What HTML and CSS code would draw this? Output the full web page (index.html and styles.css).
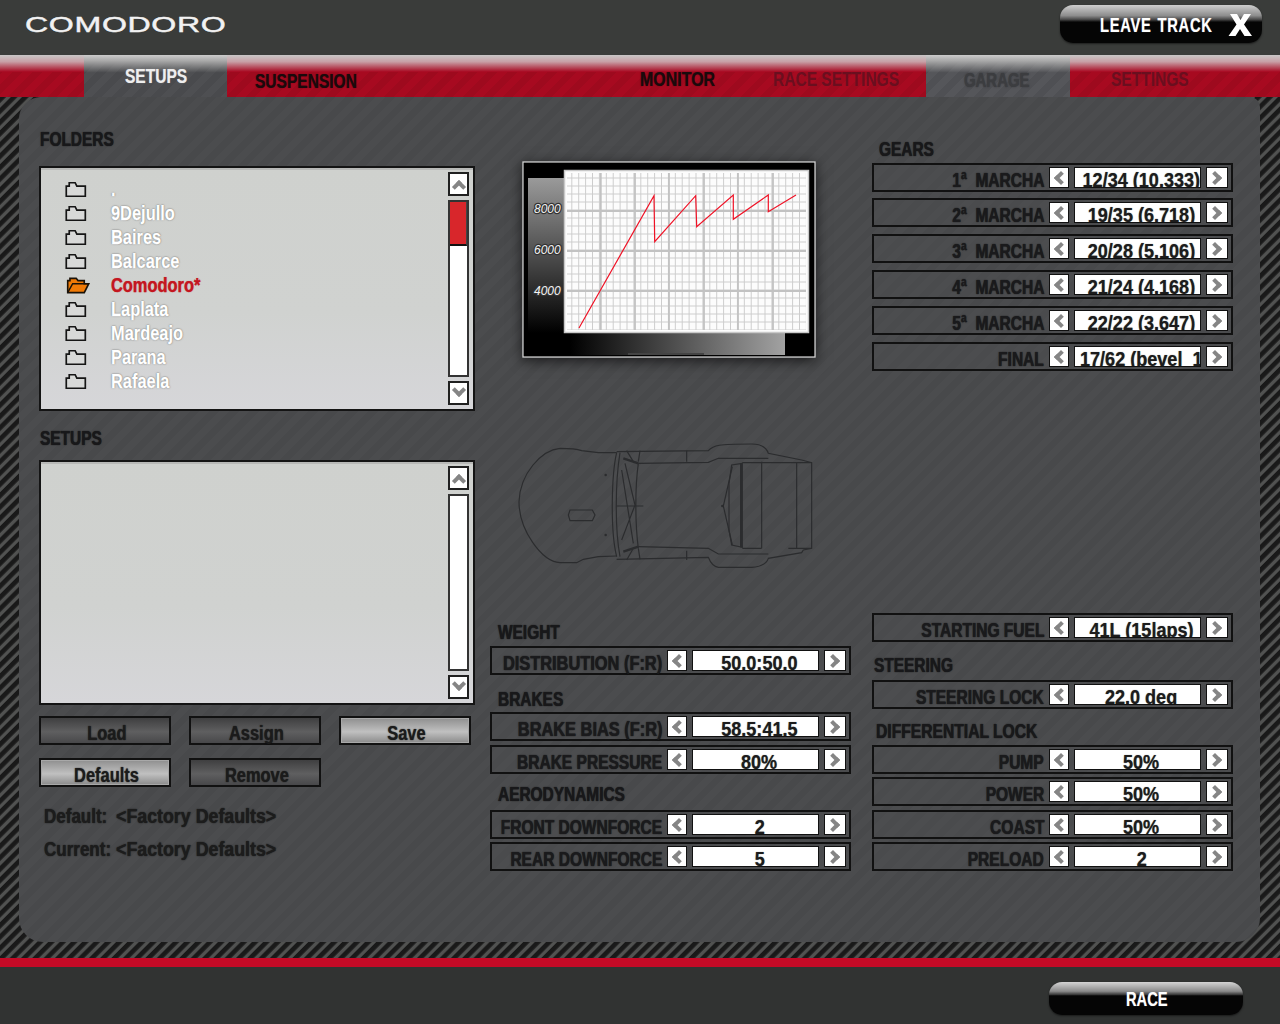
FILE: index.html
```html
<!DOCTYPE html>
<html lang="en">
<head>
<meta charset="utf-8">
<title>Comodoro setups</title>
<link rel="stylesheet" href="styles.css">
</head>
<body>
<svg class="defs" aria-hidden="true">
  <symbol id="folder" viewBox="0 0 26 19">
    <path d="M1.500 17.500V5.500H5V1.500H12L14 5.500H24V17.500Z" fill="#d8d9d8" stroke="#151515" stroke-width="2"/>
  </symbol>
  <symbol id="folder-open" viewBox="0 0 26 19">
    <path d="M1.500 17.500V4H4V1.500H11L13 4H20V7.500H25L20 17.500Z" fill="#f07a06" stroke="#1a1208" stroke-width="1.800"/>
    <path d="M1.500 17.500L7 7.500H25" fill="none" stroke="#1a1208" stroke-width="1.600"/>
  </symbol>
</svg>
<div class="app">
  <header class="topbar">
    <div class="logo"><span class="logo-text">COMODORO</span></div>
    <button class="pill leave">
      <span class="leave-text">LEAVE TRACK</span>
      <svg class="leave-x" viewBox="0 0 24 24"><path d="M2 1H9L12.500 7L16 1H23L16 11.500L24 23H16.500L12 16L7.500 23H0.500L8.500 11.500Z" fill="#fff"/></svg>
    </button>
  </header>
  <nav class="tabs">
    <a class="tab tab-setups"><span>SETUPS</span></a>
    <a class="tab tab-suspension"><span>SUSPENSION</span></a>
    <a class="tab tab-monitor"><span>MONITOR</span></a>
    <a class="tab tab-race dim"><span>RACE SETTINGS</span></a>
    <a class="tab tab-garage"><span>GARAGE</span></a>
    <a class="tab tab-settings dim"><span>SETTINGS</span></a>
  </nav>
  <main class="carbon">
    <div class="panel">
      <section class="col-left">
        <h2 class="title mt32"><span>FOLDERS</span></h2>
        <div class="list mt17">
          <ul class="items">
            <li class="item"><svg class="folder"><use href="#folder"/></svg><span>.</span></li>
            <li class="item"><svg class="folder"><use href="#folder"/></svg><span>9Dejullo</span></li>
            <li class="item"><svg class="folder"><use href="#folder"/></svg><span>Baires</span></li>
            <li class="item"><svg class="folder"><use href="#folder"/></svg><span>Balcarce</span></li>
            <li class="item active"><svg class="folder"><use href="#folder-open"/></svg><span>Comodoro*</span></li>
            <li class="item"><svg class="folder"><use href="#folder"/></svg><span>Laplata</span></li>
            <li class="item"><svg class="folder"><use href="#folder"/></svg><span>Mardeajo</span></li>
            <li class="item"><svg class="folder"><use href="#folder"/></svg><span>Parana</span></li>
            <li class="item"><svg class="folder"><use href="#folder"/></svg><span>Rafaela</span></li>
          </ul>
          <div class="scroll">
            <div class="sbtn"><i class="chev up"></i></div>
            <div class="track"><div class="thumb"></div></div>
            <div class="sbtn"><i class="chev down"></i></div>
          </div>
        </div>
        <h2 class="title mt17"><span>SETUPS</span></h2>
        <div class="list mt12">
          <ul class="items"></ul>
          <div class="scroll">
            <div class="sbtn"><i class="chev up"></i></div>
            <div class="track"></div>
            <div class="sbtn"><i class="chev down"></i></div>
          </div>
        </div>
        <div class="btns mt11">
          <button class="btn"><span>Load</span></button>
          <button class="btn"><span>Assign</span></button>
          <button class="btn light"><span>Save</span></button>
        </div>
        <div class="btns mt13">
          <button class="btn light"><span>Defaults</span></button>
          <button class="btn"><span>Remove</span></button>
        </div>
        <p class="info mt19"><span class="info-key"><span>Default:</span></span><span class="info-val">&lt;Factory Defaults&gt;</span></p>
        <p class="info mt13"><span class="info-key"><span>Current:</span></span><span class="info-val">&lt;Factory Defaults&gt;</span></p>
      </section>

      <section class="col-mid">
        <div class="graph">
          <svg viewBox="0 0 294 197" width="294" height="197">
            <defs>
              <pattern id="minor" x="2" y="1.500" width="6.900" height="8" patternUnits="userSpaceOnUse">
                <path d="M6.900 0V8M0 8H6.900" stroke="#cdcdcd" stroke-width="2" fill="none"/>
              </pattern>
              <linearGradient id="gv" x1="0" y1="0" x2="0" y2="1">
                <stop offset="0" stop-color="#9a9a9a"/><stop offset="1" stop-color="#000"/>
              </linearGradient>
              <linearGradient id="gh" x1="0" y1="0" x2="1" y2="0">
                <stop offset="0" stop-color="#000"/><stop offset="1" stop-color="#a2a2a2"/>
              </linearGradient>
            </defs>
            <rect x="1" y="1" width="292" height="195" fill="#000" stroke="#d8d8d8" stroke-width="1.200"/>
            <rect x="6" y="17" width="37" height="155" fill="url(#gv)"/>
            <rect x="48" y="170" width="215" height="24" fill="url(#gh)"/>
            <rect x="106" y="192" width="76" height="2" fill="#444"/>
            <rect x="42" y="9" width="245" height="163" fill="#fcfcfc"/>
            <rect x="45" y="12" width="239" height="157" fill="url(#minor)"/>
            <path d="M78.800 12V169M113 12V169M147 12V169M182 12V169M216 12V169M251 12V169M45 50H284M45 90H284M45 130H284" stroke="#c2c2c2" stroke-width="1.800" fill="none"/>
            <rect x="42.500" y="9.500" width="244" height="162" fill="none" stroke="#c8c8c8" stroke-width="1.500"/>
            <path d="M57 167L132 34.700L132.700 80.700L173.700 34.700L174.700 65.700L211.300 34L211.300 58.300L246.300 34L246.300 50.700L274 34" fill="none" stroke="#f01226" stroke-width="1.200"/>
            <text class="axis" x="12" y="52">8000</text>
            <text class="axis" x="12" y="93">6000</text>
            <text class="axis" x="12" y="134">4000</text>
          </svg>
        </div>
        <svg class="car" viewBox="0 0 960 450" width="320" height="150" fill="none" stroke="#2b2c2e" stroke-width="3.500">
          <path d="M335 68H280L230 62C210 55 190 55 165 55C110 60 45 130 42 215C42 300 110 395 165 398H215L235 388L280 380L335 378"/>
          <path d="M335 65L610 62C625 45 640 42 740 42C770 42 785 55 790 70L890 90L920 98V355L895 360L890 368L790 385C785 400 770 410 740 412H640C625 410 615 395 610 382L335 388"/>
          <path d="M875 98V355M920 98H770M850 355H920M770 95V355M770 98H712M770 355H712"/>
          <path d="M712 100L680 105L672 160V300L680 345L712 352Z"/>
          <path d="M708 100V352" stroke-width="6"/>
          <path d="M682 110L655 228L682 345"/>
          <path d="M400 100L610 97L640 85H790M400 350L610 355L640 372H790"/>
          <path d="M405 62L400 95M545 62V95M365 62L385 95M545 362V390M400 355L405 388M365 390L385 355"/>
          <path d="M335 68C320 130 315 300 335 380M345 68C330 160 330 300 345 380M400 100C390 170 390 280 400 355"/>
          <path d="M360 100L390 225L350 330M350 120L385 340M335 228H415"/>
          <path d="M195 240H262L270 255L262 272H195L190 255Z"/>
          <path d="M355 85L400 100M355 365L400 350" stroke-width="7"/>
          <circle cx="302" cy="135" r="2"/><circle cx="302" cy="315" r="2"/><circle cx="652" cy="228" r="2"/>
        </svg>
        <h2 class="title mt42"><span>WEIGHT</span></h2>
        <div class="row mt4"><span class="lab lab-wide"><span>DISTRIBUTION (F:R)</span></span><b class="arr"><i class="chev left"></i></b><span class="val"><span>50.0:50.0</span></span><b class="arr"><i class="chev right"></i></b></div>
        <h2 class="title mt14"><span>BRAKES</span></h2>
        <div class="row mt3"><span class="lab lab-wide"><span>BRAKE BIAS (F:R)</span></span><b class="arr"><i class="chev left"></i></b><span class="val"><span>58.5:41.5</span></span><b class="arr"><i class="chev right"></i></b></div>
        <div class="row mt4"><span class="lab"><span>BRAKE PRESSURE</span></span><b class="arr"><i class="chev left"></i></b><span class="val"><span>80%</span></span><b class="arr"><i class="chev right"></i></b></div>
        <h2 class="title mt10"><span>AERODYNAMICS</span></h2>
        <div class="row mt6"><span class="lab"><span>FRONT DOWNFORCE</span></span><b class="arr"><i class="chev left"></i></b><span class="val"><span>2</span></span><b class="arr"><i class="chev right"></i></b></div>
        <div class="row mt3"><span class="lab"><span>REAR DOWNFORCE</span></span><b class="arr"><i class="chev left"></i></b><span class="val"><span>5</span></span><b class="arr"><i class="chev right"></i></b></div>
      </section>

      <section class="col-right">
        <h2 class="title mt42"><span>GEARS</span></h2>
        <div class="row mt4"><span class="lab"><span>1ª  MARCHA</span></span><b class="arr"><i class="chev left"></i></b><span class="val"><span>12/34 (10.333)</span></span><b class="arr"><i class="chev right"></i></b></div>
        <div class="row mt6"><span class="lab"><span>2ª  MARCHA</span></span><b class="arr"><i class="chev left"></i></b><span class="val"><span>19/35 (6.718)</span></span><b class="arr"><i class="chev right"></i></b></div>
        <div class="row mt7"><span class="lab"><span>3ª  MARCHA</span></span><b class="arr"><i class="chev left"></i></b><span class="val"><span>20/28 (5.106)</span></span><b class="arr"><i class="chev right"></i></b></div>
        <div class="row mt7"><span class="lab"><span>4ª  MARCHA</span></span><b class="arr"><i class="chev left"></i></b><span class="val"><span>21/24 (4.168)</span></span><b class="arr"><i class="chev right"></i></b></div>
        <div class="row mt7"><span class="lab"><span>5ª  MARCHA</span></span><b class="arr"><i class="chev left"></i></b><span class="val"><span>22/22 (3.647)</span></span><b class="arr"><i class="chev right"></i></b></div>
        <div class="row mt7"><span class="lab"><span>FINAL</span></span><b class="arr"><i class="chev left"></i></b><span class="val val-start"><span>17/62 (bevel  1</span></span><b class="arr"><i class="chev right"></i></b></div>
        <div class="row mt242"><span class="lab"><span>STARTING FUEL</span></span><b class="arr"><i class="chev left"></i></b><span class="val"><span>41L (15laps)</span></span><b class="arr"><i class="chev right"></i></b></div>
        <h2 class="title title-flush mt13"><span>STEERING</span></h2>
        <div class="row mt5"><span class="lab"><span>STEERING LOCK</span></span><b class="arr"><i class="chev left"></i></b><span class="val"><span>22.0 deg</span></span><b class="arr"><i class="chev right"></i></b></div>
        <h2 class="title title-diff mt12"><span>DIFFERENTIAL LOCK</span></h2>
        <div class="row mt4"><span class="lab"><span>PUMP</span></span><b class="arr"><i class="chev left"></i></b><span class="val"><span>50%</span></span><b class="arr"><i class="chev right"></i></b></div>
        <div class="row mt3"><span class="lab"><span>POWER</span></span><b class="arr"><i class="chev left"></i></b><span class="val"><span>50%</span></span><b class="arr"><i class="chev right"></i></b></div>
        <div class="row mt4"><span class="lab"><span>COAST</span></span><b class="arr"><i class="chev left"></i></b><span class="val"><span>50%</span></span><b class="arr"><i class="chev right"></i></b></div>
        <div class="row mt3"><span class="lab"><span>PRELOAD</span></span><b class="arr"><i class="chev left"></i></b><span class="val"><span>2</span></span><b class="arr"><i class="chev right"></i></b></div>
      </section>
    </div>
  </main>
  <div class="redline"></div>
  <footer class="footer">
    <button class="pill race"><span>RACE</span></button>
  </footer>
</div>
</body>
</html>
```

FILE: styles.css
```css
* { box-sizing: border-box; }
html, body { margin: 0; padding: 0; background: #3a3c3a; }
body { width: 1280px; height: 1024px; overflow: hidden; font-family: "Liberation Sans", Arial, sans-serif; font-weight: 700; color: #1c1c1c; }
.defs { display: none; }
ul, h2, p { margin: 0; padding: 0; list-style: none; font-weight: 700; }
button { font: inherit; padding: 0; }

.app { display: flex; flex-direction: column; height: 1024px; }

.topbar { height: 55px; flex: none; display: flex; justify-content: space-between; align-items: flex-start; background: #3a3c3a; padding: 5px 18px 0 25px; }
.logo { padding-top: 5px; width: 200px; }
.logo-text { display: block; font-weight: 400; font-size: 25px; line-height: 28px; color: #f2f2f2; letter-spacing: 0.5px; transform: scaleX(1.285) scaleY(0.86); transform-origin: left center; white-space: nowrap; -webkit-text-stroke: 0.5px #f2f2f2; }
.pill { border: 0; color: #fff; border-radius: 13px; background: linear-gradient(#cfcfcf 0, #8d8d8d 28%, #4a4a4a 38%, #050505 45%, #050505 100%); box-shadow: 0 1px 2px rgba(0,0,0,.5); text-shadow: 0 0 1px rgba(255,255,255,.5); }
.leave { width: 202px; height: 38px; display: flex; align-items: center; padding: 2px 10px 0 40px; font-size: 21px; justify-content: space-between; }
.leave-text { display: block; width: 110px; white-space: nowrap; letter-spacing: 1px; word-spacing: 2px; transform: scaleX(.7); transform-origin: left center; }
.leave-x { width: 24px; height: 24px; flex: none; }

.tabs { height: 42px; flex: none; display: flex; padding-left: 84px; font-size: 21px; background: linear-gradient(#c8c6c6 0, #c8a0a6 16%, #a80a22 40%, rgba(168,10,34,0) 41%), repeating-linear-gradient(135deg, #a70a20 0 7px, #9e0a1e 7px 14px); }
.tab { display: block; height: 42px; white-space: nowrap; line-height: 42px; color: #1a0a0c; text-shadow: 0 0 1px rgba(0,0,0,.6); }
.tab span { display: inline-block; transform: scaleX(.74); transform-origin: left center; }
.tab-setups { width: 143px; padding-left: 41px; color: #eee; text-shadow: 0 0 1px rgba(255,255,255,.5); background: linear-gradient(#cccccc 0, #a8a8a8 14%, rgba(78,79,82,0) 42%), repeating-linear-gradient(135deg, #4e4f52 0 7px, #494a4d 7px 14px); }
.tab-suspension { width: 413px; padding: 5px 0 0 28px; }
.tab-monitor { width: 133px; padding-top: 3px; }
.tab-monitor span { transform: scaleX(.76); }
.tab-race { width: 153px; padding-top: 3px; }
.tab-garage { width: 144px; padding: 4px 0 0 38px; color: #3c3d40; text-shadow: 0 0 2px rgba(40,40,44,.7); background: linear-gradient(#cccccc 0, #a8a8a8 14%, rgba(78,79,82,0) 42%), repeating-linear-gradient(135deg, #55565a 0 7px, #4f5054 7px 14px); }
.tab-garage span { transform: scaleX(.71); }
.tab-settings { padding: 3px 0 0 41px; }
.dim { color: #6a0f1f; text-shadow: none; }

.carbon { height: 861px; flex: none; padding: 0 20px 16px 19px; background: repeating-linear-gradient(135deg, #191919 0 3px, #262626 4px, #515251 5px 7px, #262626 8px); }
.panel { height: 845px; border-radius: 22px 10px 24px 24px; padding-left: 20px; display: flex; gap: 15px; background: repeating-linear-gradient(135deg, #4b4c4e 0 7px, #48494b 7px 14px); }

.col-left { width: 436px; flex: none; }
.col-mid { width: 361px; flex: none; }
.col-right { width: 361px; flex: none; margin-left: 6px; }

.title { font-size: 21px; line-height: 20px; height: 20px; color: #18181a; text-shadow: 0 0 1.5px rgba(0,0,0,.8); -webkit-text-stroke: .2px #18181a; white-space: nowrap; }
.title span { display: inline-block; transform: scaleX(.735); transform-origin: left center; }
.col-left .title { padding-left: 1px; }
.col-mid .title { padding-left: 8px; }
.col-right .title { padding-left: 7px; }
.col-right .title-flush { padding-left: 2px; }
.col-right .title-diff { padding-left: 4px; }
.title-diff span { transform: scaleX(.745); }

.mt3 { margin-top: 3px; } .mt4 { margin-top: 4px; } .mt5 { margin-top: 5px; } .mt6 { margin-top: 6px; }
.mt7 { margin-top: 7px; } .mt10 { margin-top: 10px; } .mt11 { margin-top: 11px; } .mt12 { margin-top: 12px; }
.mt13 { margin-top: 13px; } .mt14 { margin-top: 14px; } .mt17 { margin-top: 17px; } .mt19 { margin-top: 19px; }
.mt32 { margin-top: 32px; } .mt42 { margin-top: 42px; } .mt242 { margin-top: 242px; }

.list { height: 245px; border: 2px solid #141414; display: flex; background: linear-gradient(#cfd1ce, #d0d2d0 60%, #d6d6d9); box-shadow: inset 0 2px 0 #b8b9b7; }
.items { flex: 1; padding-top: 9px; }
.item { height: 24px; display: flex; align-items: center; padding-left: 24px; font-size: 20px; color: #fff; text-shadow: 0 0 2px #6e6e6e, 0 0 1px #7c7c7c; -webkit-text-stroke: .25px #fff; white-space: nowrap; }
.item span { display: block; margin-left: 24px; transform: scaleX(.82); transform-origin: left center; }
.item.active { color: #c4161f; text-shadow: 0 0 1px rgba(196,22,31,.6); -webkit-text-stroke: .25px #c4161f; }
.folder { width: 22px; height: 17px; flex: none; }
.item.active .folder { width: 26px; height: 17px; margin-right: -4px; }

.scroll { width: 21px; margin: 4px 4px 0 0; display: flex; flex-direction: column; gap: 4px; }
.sbtn { height: 24px; background: #fff; border: 2px solid #202020; display: flex; align-items: center; justify-content: center; }
.track { height: 177px; background: #fff; border: 2px solid #333; }
.thumb { height: 44px; background: #d8262b; border-bottom: 2px solid #111; border-right: 1px solid #444; }

.chev { display: block; width: 10px; height: 10px; flex: none; border: solid #858585; border-width: 4px 0 0 4px; }
.chev.up { transform: translateY(3px) rotate(45deg); }
.chev.down { transform: translateY(-3px) rotate(225deg); }
.chev.left { transform: translateX(2px) rotate(-45deg); }
.chev.right { transform: translateX(-2px) rotate(135deg); }

.btns { display: flex; gap: 18px; }
.btn { width: 132px; height: 29px; border: 2px solid #111; color: #1b1b1b; font-size: 20px; padding: 4px 0 0 3px; background: linear-gradient(#3f3f40, #5f5f60 55%, #48484a); text-shadow: 0 0 1.5px rgba(0,0,0,.8); }
.btn span { display: inline-block; transform: scaleX(.82); }
.btn.light { background: linear-gradient(#8e8e8e, #c0c0c0 55%, #8a8a8a); box-shadow: inset 0 0 0 1px #a8a8a8; }

.info { height: 20px; line-height: 20px; padding-left: 5px; font-size: 20px; display: flex; color: #1c1c1c; text-shadow: 0 0 1.5px rgba(0,0,0,.8); white-space: nowrap; }
.info-key { width: 72px; flex: none; }
.info-key span { display: inline-block; transform: scaleX(.85); transform-origin: left center; }
.info-val { display: block; transform: scaleX(.89); transform-origin: left center; }

.graph { width: 294px; height: 197px; margin: 64px 0 0 32px; box-shadow: 0 3px 12px rgba(0,0,0,.65); }
.graph svg { display: block; }
.axis { font-style: italic; font-weight: 400; font-size: 12px; fill: #f2f2f2; paint-order: stroke; stroke: #333; stroke-width: 2.5px; }
.car { display: block; margin: 72px 0 0 15px; }

.row { height: 29px; border: 2px solid #111; display: grid; grid-template-columns: 170px 20px 127px 22px; gap: 5px; padding: 2px 3px 0 0; background: rgba(80,80,82,.35); }
.lab { display: flex; justify-content: flex-end; font-size: 21px; line-height: 25px; height: 25px; white-space: pre; color: #1a1a1c; text-shadow: 0 0 1.5px rgba(0,0,0,.8); -webkit-text-stroke: .2px #1a1a1c; }
.lab span { display: block; flex: none; transform: scaleX(.74); transform-origin: right center; }
.lab-wide span { transform: scaleX(.78); }
.arr { display: flex; align-items: center; justify-content: center; height: 21px; background: #fff; border: 1px solid #111; }
.val { display: flex; justify-content: center; height: 21px; background: #fff; border: 1px solid #111; overflow: hidden; white-space: pre; font-size: 21px; line-height: 22px; padding: 1px 0 0 8px; color: #1c1c1c; text-shadow: 0 0 1px rgba(0,0,0,.6); }
.val span { display: block; flex: none; transform: scaleX(.86); }
.val-start { justify-content: flex-start; padding-left: 5px; }
.val-start span { transform-origin: left center; }

.redline { height: 9px; flex: none; background: #c40a26; }
.footer { flex: 1; background: #313332; padding: 15px 37px 0 0; display: flex; justify-content: flex-end; align-items: flex-start; }
.race { width: 194px; height: 33px; font-size: 21px; padding: 1px 0 0 2px; background: linear-gradient(#d4d4d4 0, #8a8a8a 28%, #3a3a3a 38%, #050505 42%, #050505 100%); }
.race span { display: inline-block; transform: scaleX(.7); }
```
